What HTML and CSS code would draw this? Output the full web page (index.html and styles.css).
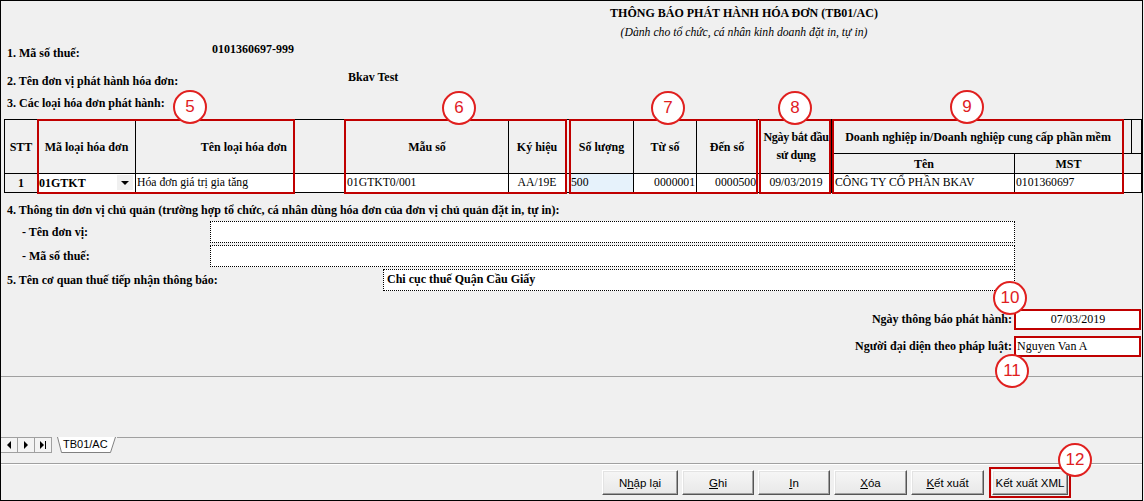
FILE: index.html
```html
<!DOCTYPE html>
<html lang="vi">
<head>
  <meta charset="UTF-8" />
  <title>TB01/AC</title>
  <link rel="stylesheet" href="styles.css">
</head>
<body>

  <div class="window">

    <!-- Form -->
    <div class="form">
      <div class="head">
        <div class="title">THÔNG BÁO PHÁT HÀNH HÓA ĐƠN (TB01/AC)</div>
        <div class="subtitle">(Dành cho tổ chức, cá nhân kinh doanh đặt in, tự in)</div>
      </div>

      <div class="field f1"><span class="label">1. Mã số thuế:</span><span class="value">0101360697-999</span></div>
      <div class="field f2"><span class="label">2. Tên đơn vị phát hành hóa đơn:</span><span class="value">Bkav Test</span></div>
      <div class="section sec3">3. Các loại hóa đơn phát hành:</div>

      <table class="grid">
        <colgroup>
          <col style="width:33px"><col style="width:98px"><col style="width:159px"><col style="width:51px">
          <col style="width:163px"><col style="width:57px"><col style="width:4px"><col style="width:64px">
          <col style="width:63px"><col style="width:61px"><col style="width:3px"><col style="width:71px">
          <col style="width:2px"><col style="width:181px"><col style="width:108px"><col style="width:9px"><col style="width:10px">
        </colgroup>
        <tr class="hrow1">
          <th rowspan="2">STT</th>
          <th rowspan="2">Mã loại hóa đơn</th>
          <th rowspan="2" class="right">Tên loại hóa đơn</th>
          <th rowspan="2"></th>
          <th rowspan="2">Mẫu số</th>
          <th rowspan="2">Ký hiệu</th>
          <th rowspan="2"></th>
          <th rowspan="2">Số lượng</th>
          <th rowspan="2">Từ số</th>
          <th rowspan="2">Đến số</th>
          <th rowspan="2"></th>
          <th rowspan="2" class="two">Ngày bắt đầu<br>sử dụng</th>
          <th rowspan="2"></th>
          <th colspan="2">Doanh nghiệp in/Doanh nghiệp cung cấp phần mềm</th>
          <th></th>
          <th></th>
        </tr>
        <tr class="hrow2">
          <th>Tên</th>
          <th>MST</th>
          <th colspan="2"></th>
        </tr>
        <tr class="drow">
          <td class="stt">1</td>
          <td class="code"><b>01GTKT</b><span class="drop"></span></td>
          <td>Hóa đơn giá trị gia tăng</td>
          <td></td>
          <td>01GTKT0/001</td>
          <td class="center">AA/19E</td>
          <td class="gap"></td>
          <td class="sel">500</td>
          <td class="num">0000001</td>
          <td class="num">0000500</td>
          <td class="gap"></td>
          <td class="center">09/03/2019</td>
          <td class="gap"></td>
          <td>CÔNG TY CỔ PHẦN BKAV</td>
          <td>0101360697</td>
          <td colspan="2"></td>
        </tr>
      </table>

      <div class="section sec4">4. Thông tin đơn vị chủ quản (trường hợp tổ chức, cá nhân dùng hóa đơn của đơn vị chủ quản đặt in, tự in):</div>
      <div class="sub-row first">
        <span class="sub-label">- Tên đơn vị:</span>
        <div class="input"></div>
      </div>
      <div class="sub-row">
        <span class="sub-label">- Mã số thuế:</span>
        <div class="input"></div>
      </div>
      <div class="sub-row">
        <span class="sub-label wide">5. Tên cơ quan thuế tiếp nhận thông báo:</span>
        <div class="input short"><b>Chi cục thuế Quận Cầu Giấy</b></div>
      </div>

      <div class="sign-row first">
        <span class="sign-label">Ngày thông báo phát hành:</span>
        <div class="sign-box center">07/03/2019</div>
      </div>
      <div class="sign-row">
        <span class="sign-label">Người đại diện theo pháp luật:</span>
        <div class="sign-box">Nguyen Van A</div>
      </div>
    </div>

    <!-- Sheet tabs -->
    <div class="sheet">
      <div class="tabs">
        <div class="nav">
          <span class="nav-btn"><svg width="6" height="8" viewBox="0 0 6 8"><polygon points="5,0 5,8 1,4" fill="#000"/></svg></span>
          <span class="nav-btn"><svg width="6" height="8" viewBox="0 0 6 8"><polygon points="1,0 1,8 5,4" fill="#000"/></svg></span>
          <span class="nav-btn"><svg width="8" height="8" viewBox="0 0 8 8"><polygon points="1,0 1,8 5,4" fill="#000"/><rect x="6" y="0" width="1" height="8" fill="#000"/></svg></span>
        </div>
        <div class="tab">
          <svg class="tab-shape" width="60" height="16" viewBox="0 0 60 16">
            <polygon points="0,0 59,0 54,15 4,15" fill="#fff"/>
            <polyline points="0.5,0 4.5,15.5 53.5,15.5 58.5,0" fill="none" stroke="#808080"/>
          </svg>
          <span class="tab-text">TB01/AC</span>
        </div>
        <div class="tab-line"></div>
      </div>
    </div>

    <!-- Buttons -->
    <div class="buttons">
      <button class="btn w76">N<u>h</u>ập lại</button>
      <button class="btn"><u>G</u>hi</button>
      <button class="btn"><u>I</u>n</button>
      <button class="btn w73"><u>X</u>óa</button>
      <button class="btn w73"><u>K</u>ết xuất</button>
      <button class="btn xml">Kết xuất XML</button>
    </div>

    <!-- Annotations -->
    <div class="mark" style="left:36px;top:118px;width:258px"></div>
    <div class="mark" style="left:343px;top:118px;width:223px"></div>
    <div class="mark" style="left:568px;top:118px;width:189px"></div>
    <div class="mark" style="left:758px;top:118px;width:72px"></div>
    <div class="mark" style="left:831px;top:118px;width:292px"></div>

    <div class="badge" style="left:172px;top:89px">5</div>
    <div class="badge" style="left:441px;top:90px">6</div>
    <div class="badge" style="left:650px;top:90px">7</div>
    <div class="badge" style="left:777px;top:90px">8</div>
    <div class="badge" style="left:949px;top:89px">9</div>
    <div class="badge" style="left:992px;top:280px">10</div>
    <div class="badge" style="left:994px;top:353px">11</div>
    <div class="badge" style="left:1057px;top:442px">12</div>
  </div>

</body>
</html>
```

FILE: styles.css
```css
body {
  margin: 0;
  background: #f0f0f0;
  font-family: 'Liberation Serif', 'Times New Roman', serif;
  color: #000;
}
.window {
  position: relative;
  width: 1143px;
  height: 501px;
  box-sizing: border-box;
  border: 1px solid #000;
  display: flex;
  flex-direction: column;
  background: #f0f0f0;
}
.form {
  height: 376px;
  flex: none;
  box-sizing: border-box;
  border-bottom: 1px solid #a0a0a0;
  padding: 4px 0 0 6px;
}
.head {
  padding-left: 339px;
  text-align: center;
}
.title {
  font-weight: bold;
  font-size: 12px;
  line-height: 16px;
}
.subtitle {
  font-style: italic;
  font-size: 11.7px;
  line-height: 16px;
  margin-top: 4px;
}
.field {
  display: flex;
  align-items: flex-start;
  font-weight: bold;
  font-size: 12px;
  line-height: 16px;
}
.field .label {
  padding-top: 4px;
}
.f1 .label {
  width: 205px;
}
.f2 {
  margin-top: 8px;
}
.f2 .label {
  width: 341px;
}
.section {
  font-weight: bold;
  font-size: 12px;
  line-height: 16px;
}
.sec3 {
  margin-top: 6px;
}
.sec4 {
  margin-top: 9px;
}

/* grid */
.grid {
  margin: 8px 0 0 -3px;
  table-layout: fixed;
  width: 1138px;
  border-collapse: separate;
  border-spacing: 0;
  border-top: 1px solid #000;
  border-left: 1px solid #000;
  font-size: 11.7px;
}
.grid th,
.grid td {
  box-sizing: border-box;
  border-right: 1px solid #000;
  border-bottom: 1px solid #000;
  padding: 0 1px;
  white-space: nowrap;
  overflow: hidden;
  line-height: 16px;
}
.grid th {
  background: #f0f0f0;
  font-weight: bold;
  font-size: 12px;
  text-align: center;
}
.grid th.right {
  text-align: right;
  padding-right: 7px;
}
.grid th.two {
  line-height: 18px;
  padding: 0 0 2px;
  letter-spacing: -0.3px;
}
.hrow1 {
  height: 34px;
}
.hrow2 {
  height: 20px;
}
.drow {
  height: 19px;
}
.grid td {
  background: #fff;
  text-align: left;
}
.grid td.stt {
  background: #f0f0f0;
  text-align: center;
  font-weight: bold;
  font-size: 12px;
}
.grid td.code {
  position: relative;
  font-size: 12px;
}
.grid td.gap {
  background: #f0f0f0;
}
.grid td.sel {
  background: #e6f2fb;
}
.grid td.num {
  text-align: right;
}
.grid td.center {
  text-align: center;
}
.drop {
  position: absolute;
  right: 2px;
  top: 1px;
  width: 16px;
  height: 15px;
  background: #f0f0f0;
}
.drop::after {
  content: "";
  position: absolute;
  left: 4px;
  top: 6px;
  border-left: 4px solid transparent;
  border-right: 4px solid transparent;
  border-top: 4px solid #000;
}

/* owner unit / tax office */
.sub-row {
  display: flex;
  align-items: center;
  height: 22px;
  margin-top: 2px;
}
.sub-row.first {
  margin-top: 3px;
}
.sub-label {
  width: 203px;
  box-sizing: border-box;
  padding-left: 15px;
  font-weight: bold;
  font-size: 12px;
}
.sub-label.wide {
  width: 376px;
  padding-left: 0;
}
.input {
  width: 805px;
  height: 22px;
  box-sizing: border-box;
  border: 1px dotted #000;
  background: #fff;
  font-size: 12px;
  line-height: 19px;
  padding-left: 3px;
}
.input.short {
  width: 632px;
}

/* signature fields */
.sign-row {
  display: flex;
  justify-content: flex-end;
  align-items: center;
  margin-top: 6px;
  margin-right: 1px;
}
.sign-row.first {
  margin-top: 18px;
}
.sign-label {
  font-weight: bold;
  font-size: 12px;
  margin-right: 2px;
}
.sign-box {
  width: 127px;
  height: 21px;
  box-sizing: border-box;
  border: 2px solid #c00000;
  background: #fff;
  font-size: 12px;
  line-height: 16px;
  padding-left: 1px;
}
.sign-box.center {
  text-align: center;
}

/* sheet tabs */
.sheet {
  height: 87px;
  flex: none;
  box-sizing: border-box;
  border-bottom: 1px solid #a0a0a0;
  display: flex;
  flex-direction: column;
  justify-content: flex-end;
  padding-bottom: 10px;
}
.tabs {
  display: flex;
  height: 16px;
}
.nav {
  display: flex;
  border-top: 1px solid #a0a0a0;
  border-bottom: 1px solid #a0a0a0;
  box-sizing: border-box;
  height: 16px;
  background: #f4f4f4;
}
.nav-btn {
  width: 16px;
  height: 14px;
  border-right: 1px solid #a0a0a0;
  display: flex;
  align-items: center;
  justify-content: center;
}
.tab {
  position: relative;
  width: 60px;
  height: 16px;
  margin-left: 5px;
}
.tab-shape {
  position: absolute;
  left: 0;
  top: 0;
}
.tab-text {
  position: relative;
  display: block;
  padding-left: 6px;
  font-family: 'Liberation Sans', Arial, sans-serif;
  font-size: 11px;
  line-height: 15px;
}
.tab-line {
  flex: 1;
  border-top: 1px solid #a0a0a0;
}

/* buttons */
.buttons {
  flex: 1;
  display: flex;
  justify-content: flex-end;
  align-items: flex-start;
  gap: 4px;
  padding: 6px 74px 0 0;
  box-shadow: inset 0 1px 0 #fff;
}
.btn {
  width: 72px;
  height: 25px;
  box-sizing: border-box;
  padding: 0;
  background: linear-gradient(#f6f6f6, #e8e8e8);
  border: 1px solid;
  border-color: #fff #555 #555 #fff;
  box-shadow: inset -1px -1px 0 #a0a0a0, inset 1px 1px 0 #e3e3e3;
  font-family: 'Liberation Sans', Arial, sans-serif;
  font-size: 11.5px;
  color: #000;
}
.btn.w76 {
  width: 76px;
}
.btn.w73 {
  width: 73px;
}
.btn.xml {
  width: 76px;
  margin-left: 4px;
  outline: 2px solid #c00000;
  outline-offset: 1px;
}

/* annotations */
.mark {
  position: absolute;
  height: 75px;
  box-sizing: border-box;
  border: 2px solid #c00000;
}
.badge {
  position: absolute;
  width: 34px;
  height: 34px;
  box-sizing: border-box;
  border: 2.5px solid #e0201f;
  border-radius: 50%;
  background: #fff;
  color: #e0201f;
  font-family: 'Liberation Sans', Arial, sans-serif;
  font-size: 17px;
  line-height: 29px;
  text-align: center;
}
```
